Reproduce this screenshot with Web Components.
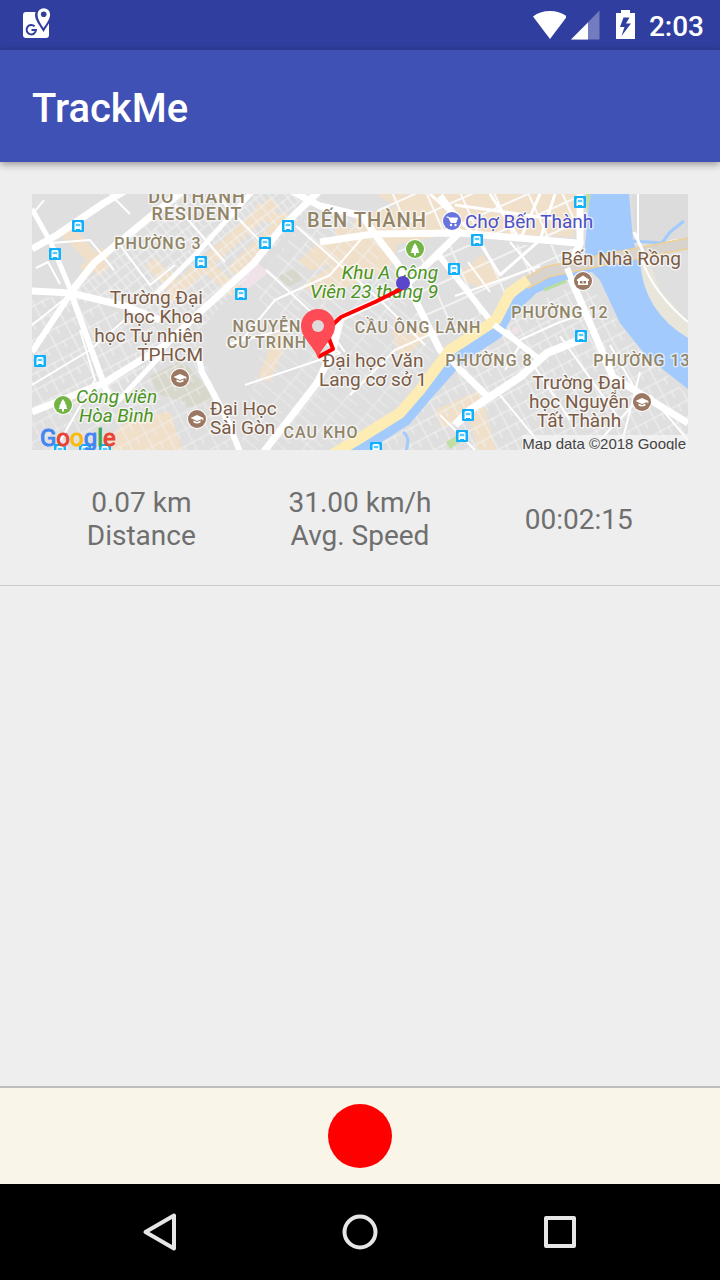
<!DOCTYPE html>
<html lang="en">
<head>
<meta charset="utf-8">
<meta name="viewport" content="width=device-width, initial-scale=1">
<title>TrackMe</title>
<style>
  body { margin: 0; background: #eee; font-family: Roboto, "Noto Sans", sans-serif; }
</style>
</head>
<body>
<track-app></track-app>

<template id="status-bar">
  <style>
    :host { display: flex; align-items: center; gap: 12px; height: 50px; padding: 0 16px 0 22px; background: #303f9f; color: #fff; }
    svg { display: block; flex: none; }
    .space { flex: 1; }
    .signal { display: flex; gap: 4px; }
    time { font-size: 28px; line-height: 32px; font-weight: 500; padding-top: 4px; }
  </style>
  <svg width="30" height="34" viewBox="22 8 30 34" aria-hidden="true">
    <rect x="23" y="12" width="26" height="26" rx="3" fill="#fff"/>
    <path d="M43.500 32C40 26 35 20 35 15a8.500 8.500 0 0 1 17 0C52 20 47 26 43.500 32Z" fill="#303f9f"/>
    <path d="M43.500 28C40.500 23.500 37.500 19 37.500 14.500a6.300 6.300 0 0 1 12.600 0C50 19 46.500 23.500 43.500 28Z" fill="#fff"/>
    <circle cx="43.700" cy="14.300" r="2.800" fill="#303f9f"/>
    <path d="M34.600 26.300A4.700 4.700 0 1 0 36 30h-4.500" fill="none" stroke="#303f9f" stroke-width="2"/>
  </svg>
  <span class="space"></span>
  <div class="signal">
    <svg width="34" height="30" viewBox="532 10 34 30" aria-hidden="true"><path d="M550 39 533 16.500Q540 11 550 11t17 5.500Z" fill="#fff"/></svg>
    <svg width="29" height="30" viewBox="570 10 29 30" overflow="visible" aria-hidden="true"><path d="M599.500 10.500V39.500H571Z" fill="#fff" opacity=".32"/><path d="M588 22.500V39.500H571Z" fill="#fff"/></svg>
  </div>
  <svg width="26" height="30" viewBox="611 10 26 30" aria-hidden="true">
    <path d="M621 10h9v3h5v26h-19V13h5Z" fill="#fff"/>
    <path d="M629.500 17.500H623.500L620 27h4.500l-3 9 9.500-12.500h-5Z" fill="#303f9f"/>
  </svg>
  <time>2:03</time>
</template>

<template id="app-toolbar">
  <style>
    :host { display: flex; align-items: center; height: 112px; padding: 0 32px; background: #3f51b5; color: #fff; box-shadow: 0 2px 8px rgba(0,0,0,.4); position: relative; }
    h1 { margin: 0; padding-top: 6px; font-size: 40px; line-height: 48px; font-weight: 500; }
  </style>
  <h1><slot></slot></h1>
</template>

<template id="ride-stat">
  <style>
    :host { display: block; font-size: 28px; line-height: 33px; color: #6f6f6f; text-align: center; }
    ::slotted(*) { display: block; }
  </style>
  <slot></slot>
</template>

<template id="ride-item">
  <style>
    :host { display: block; padding: 32px 32px 33px; border-bottom: 1px solid #ccc; }
    .stats { display: grid; grid-template-columns: repeat(3, 1fr); align-items: center; margin-top: 36px; }
  </style>
  <slot name="map"></slot>
  <div class="stats"><slot></slot></div>
</template>

<template id="record-bar">
  <style>
    :host { display: flex; justify-content: center; padding: 16px; background: #f9f5e8; border-top: 2px solid #bdbdbd; }
    button { width: 64px; height: 64px; padding: 0; border: 0; border-radius: 50%; background: #f00; }
  </style>
  <button type="button" aria-label="Record"></button>
</template>

<template id="nav-bar">
  <style>
    :host { display: flex; justify-content: center; gap: 56px; height: 96px; background: #000; }
    button { width: 144px; padding: 0; border: 0; background: none; display: grid; place-items: center; }
    svg { display: block; fill: none; stroke: #e6e6e6; stroke-width: 4; stroke-linejoin: round; }
  </style>
  <button type="button" aria-label="Back"><svg width="40" height="40"><path d="M34 3.500v33L5.500 20Z"/></svg></button>
  <button type="button" aria-label="Home"><svg width="40" height="40"><circle cx="20" cy="20" r="15.500"/></svg></button>
  <button type="button" aria-label="Recent apps"><svg width="40" height="40"><rect x="6" y="6" width="28" height="28"/></svg></button>
</template>

<template id="route-map">
  <style>
    :host { display: block; }
    svg { display: block; width: 100%; height: auto; }
    text { font-family: Roboto, "Noto Sans", sans-serif; font-size: 19px; paint-order: stroke; stroke: rgba(255,255,255,.6); stroke-width: 3px; stroke-linejoin: round; }
    .area { font-size: 16px; font-weight: 500; letter-spacing: 1px; fill: #918467; text-anchor: middle; }
    .town { font-size: 20px; }
    .res { font-size: 18px; }
    .place { fill: #7b5b45; }
    .park { fill: #4a9420; font-style: italic; }
    .shop { fill: #4a50c8; }
    .mid { text-anchor: middle; }
    .end { text-anchor: end; }
    .logo { font-size: 24px; stroke: #fff; }
    .credit { font-family: "Liberation Sans", Arial, sans-serif; font-size: 15px; fill: #444; stroke: none; text-anchor: end; }
    .road { fill: none; stroke: #fff; stroke-linejoin: round; }
    .shops { fill: none; stroke: #f0dfc9; stroke-width: 13; }
  </style>
  <svg viewBox="32 194 656 256" role="img" aria-label="Route map">
    <defs>
      <pattern id="a" width="13" height="19" patternUnits="userSpaceOnUse" patternTransform="rotate(-38)"><path d="M0 1H13M1 0V19M7 9V19M0 10H13" stroke="#f2f2f2" fill="none"/></pattern>
      <pattern id="b" width="19" height="15" patternUnits="userSpaceOnUse" patternTransform="rotate(-28)"><path d="M0 1H19M1 0V15M10 0V8" stroke="#f2f2f2" fill="none"/></pattern>
      <pattern id="c" width="18" height="26" patternUnits="userSpaceOnUse" patternTransform="rotate(-50)"><path d="M0 1H18M1 0V26M9 0V14" stroke="#f0f0f0" fill="none"/></pattern>
      <pattern id="d" width="31" height="23" patternUnits="userSpaceOnUse" patternTransform="rotate(-24)"><path d="M0 1H31M1 0V23" stroke="#fafafa" stroke-width="2" fill="none"/></pattern>
      <g id="bus"><rect x="-6" y="-6" width="12" height="12" rx="1" fill="#12b0fb"/><path d="M-3.500-2.500q0-1.500 1.500-1.500h4q1.500 0 1.500 1.500V4h-1.500V3h-4V4h-1.500Z" fill="#fff"/><path d="M-2.300-2.200h4.600v2.400h-4.600Z" fill="#12b0fb" opacity=".7"/></g>
      <g id="school"><circle r="10" fill="#fff"/><circle r="9" fill="#9c7761"/><path d="M-6.500-1 0-4 6.500-1 6 2.500 5.300 0 0 2Z" fill="#fff"/><path d="M-3.500 1.500 0 3 3.500 1.500V3.500Q0 5.500-3.500 3.500Z" fill="#fff"/></g>
      <g id="tree"><circle r="10" fill="#fff"/><circle r="9" fill="#74b444"/><path d="M0-6 2.500-2H2L4 1.500H3L4.500 4H1V6.500H-1V4H-4.500L-3 1.500H-4L-2-2H-2.500Z" fill="#fff"/></g>
    </defs>
    <path d="M32 194h656v256H32Z" fill="#dfdfdf"/>

    <g class="shops">
      <path d="M62 236 76 228M74 238 96 262 104 272M84 272 106 252M274 202 165 300M200 260 236 292M290 216 232 272M254 210 284 222M150 262 176 288"/>
      <path d="M282 334 264 380M398 330 404 350 424 330M106 442 172 418"/>
    </g>
    <g fill="#f0dfc9">
      <path d="M376 194H578l-4 43-110-4-40 6-62 12-50 20-14-10 20-18 32-6 6-22 40-8Z"/>
      <path d="M335 226 400 236l-8 30-70 34-20-14 34-24Z"/>
      <path d="M130 416 170 412l12 38H100Z"/>
      <path d="M462 272 482 254l18 24-14 12-20-8Z"/>
      <path d="M435 410 480 390l16 60H478l-8-30-28 8Z"/>
    </g>
    <path d="M240 282 256 262 269 272 244 292ZM510 332l6-7 4 6-8 6Z" fill="#f0e2e8"/>
    <path d="M150 376 182 360l20 22-18 20-26-8ZM186 380l18 4 12 16-30 8ZM278 276l18-8 6 12-16 8Z" fill="#d8d7cb"/>

    <path d="M32 300 72 294 200 345 120 395 32 412Z" fill="url(#b)"/>
    <path d="M95 262 184 194h138L200 330 72 294Z" fill="url(#a)"/>
    <path d="M32 412 200 350 240 450H32Z" fill="url(#b)" opacity=".8"/>
    <path d="M250 290 320 200 363 216 430 330 310 330 270 310Z" fill="url(#c)"/>
    <path d="M262 345 300 330 430 320 440 345 400 405 340 450H240Z" fill="url(#c)" opacity=".75"/>
    <path d="M363 194H580V240L400 236Z" fill="url(#d)"/>
    <path d="M395 245H580L560 270 500 300 440 345Z" fill="url(#d)" opacity=".7"/>
    <path d="M520 310 585 280 640 350 688 395V450H360L430 400Z" fill="url(#b)"/>
    <path d="M632 194h56v50l-54-4Z" fill="#dcdcdc"/>

    <g class="road" stroke-width="2">
      <path d="M32 325 71 294M51 243 90 240 114 270M36 268 48 262 60 284M32 385 90 350 127 318M55 450 95 380 80 330M32 215 44 200M110 194 130 214"/>
      <path d="M120 245 150 285 175 265M175 205 225 262M215 194 262 243M226 345 300 325 340 353 245 385"/>
      <path d="M242 340 275 300 330 275 362 238M266 270 325 325 345 352M296 226 380 300 425 345M350 395 395 350 440 330"/>
      <path d="M455 296 540 266M468 262 490 292M510 242 535 272M508 330 520 345 505 370M520 340 560 322 590 312"/>
      <path d="M440 415 475 450M500 395 545 450M530 360 570 420M560 336 620 420M610 345 640 398 600 440M640 372 620 450M650 395 688 440"/>
      <path d="M638 194v50M640 270 662 300 688 324M655 252q10-14 33-12"/>
    </g>
    <g class="road" stroke-width="3">
      <path d="M430 194 475 235 500 275 540 240M490 194 520 240M540 194 520 240M455 205 560 220M555 194 540 240"/>
    </g>
    <g class="road" stroke-width="7">
      <path d="M32 249 57 235 104 203 130 188M71 292 94 263 151 216 184 190"/>
      <path d="M32 209 51 243 71 291" stroke-width="5"/>
      <path d="M32 291 71 293 125 306 160 320"/>
      <path d="M197 350 202 372 227 419 240 452M71 293 32 352M71 293 106 390 114 400" stroke-width="6"/>
      <path d="M32 412 104 383 165 345 200 312 254 263 283 226 322 188"/>
      <path d="M117 402 164 352M150 300 197 253 252 192" stroke-width="5"/>
      <path d="M290 190 320 206 363 216 372 230M320 242 373 234 460 233 577 243M370 228 397 263 440 350 487 396"/>
      <path d="M405 288 375 302 341 318 333 350 317 383 262 454M440 196 455 216M462 230 397 294" stroke-width="7"/>
      <path d="M580 194v50l-13 26 13 30 33 77 75 46"/>
      <path d="M455 425 470 410 520 377 547 353 587 337" stroke-width="8"/>
      <path d="M437 253 490 320 540 360" stroke-width="6"/>
    </g>

    <path d="M590 194h39l4 46 9 30 11 30 35 37v52l-41-32-27-34-20-43-13-13-2-20Z" fill="#a2cafd"/>
    <path d="M640 262q4 50 48 76V322L660 290 648 258Z" fill="#e8e6da"/>
    <path d="M642 260q12 34 46 62" class="road" stroke-width="2"/>
    <path d="M632 241 662 243 670 232 684 221M403 432q8 6 3 18" fill="none" stroke="#a2cafd" stroke-width="3"/>
    <path d="M590 266 563 275 533 288 507 313 497 333 460 357 428 393 405 420 358 450 340 460" fill="none" stroke="#a2cafd" stroke-width="12" stroke-linejoin="round"/>
    <path d="M544 290 566 281" stroke="#b8dda0" stroke-width="3"/>
    <path d="M586 194h5l-4 20ZM446 442l10-6 4 6-10 7Z" fill="#c0dfa4"/>
    <path d="M700 241 593 262 547 272 525 284" fill="none" stroke="#efcf92" stroke-width="12"/>
    <path d="M700 241 593 262 547 272 525 284" fill="none" stroke="#d8d4cd" stroke-width="9"/>
    <path d="M528 280 510 293 496 320 450 350 420 390 400 413 360 438 330 456" fill="none" stroke="#fdecb4" stroke-width="11" stroke-linejoin="round"/>
    <path d="M567 268 580 300M494 325 512 338M448 356 460 370" class="road" stroke-width="6"/>
    <path d="M634 232 648 262" class="road" stroke-width="3"/>

    <use href="#bus" x="78" y="226"/><use href="#bus" x="55" y="254"/><use href="#bus" x="201" y="262"/>
    <use href="#bus" x="241" y="294"/><use href="#bus" x="288" y="226"/><use href="#bus" x="265" y="243"/>
    <use href="#bus" x="40" y="361"/><use href="#bus" x="477" y="240"/><use href="#bus" x="454" y="269"/>
    <use href="#bus" x="580" y="202"/><use href="#bus" x="581" y="336"/><use href="#bus" x="468" y="415"/>
    <use href="#bus" x="462" y="436"/><use href="#bus" x="376" y="448"/><use href="#bus" x="60" y="450"/>
    <use href="#bus" x="85" y="450"/><use href="#bus" x="105" y="450"/>
    <use href="#school" x="180" y="378"/><use href="#school" x="197" y="419"/><use href="#school" x="642" y="402"/>
    <use href="#tree" x="415" y="249"/><use href="#tree" x="63" y="405"/>
    <g transform="translate(583 281)"><circle r="10" fill="#fff"/><circle r="9" fill="#9c7761"/><path d="M-6-1.500 0-5.500 6-1.500V0H5V4H-5V0H-6Z" fill="#fff"/><path d="M-3 0h6v2.500h-6Z" fill="#9c7761"/><path d="M0 0v2.500" stroke="#fff"/></g>
    <g transform="translate(452 221)"><circle r="10" fill="#fff"/><circle r="9" fill="#6873de"/><path d="M-5.500-4h2L-1 1.500H4L5.500-3H-3" fill="#fff" stroke="#fff"/><circle cx="-1" cy="4" r="1.200" fill="#fff"/><circle cx="3.500" cy="4" r="1.200" fill="#fff"/></g>

    <text class="area res" x="197" y="203">DO THANH</text>
    <text class="area res" x="197" y="220">RESIDENT</text>
    <text class="area" x="158" y="249">PHƯỜNG 3</text>
    <text class="area town" x="367" y="227">BẾN THÀNH</text>
    <text class="shop" x="465" y="228">Chợ Bến Thành</text>
    <text class="park end" x="438" y="279">Khu A Công</text>
    <text class="park end" x="438" y="298">Viên 23 tháng 9</text>
    <text class="place" x="561" y="265">Bến Nhà Rồng</text>
    <text class="place end" x="203" y="304">Trường Đại</text>
    <text class="place end" x="203" y="323">học Khoa</text>
    <text class="place end" x="203" y="342">học Tự nhiên</text>
    <text class="place end" x="203" y="361">TPHCM</text>
    <text class="area" x="267" y="332">NGUYỄN</text>
    <text class="area" x="267" y="348">CƯ TRINH</text>
    <text class="area" x="418" y="333">CẦU ÔNG LÃNH</text>
    <text class="area" x="560" y="318">PHƯỜNG 12</text>
    <text class="area" x="489" y="366">PHƯỜNG 8</text>
    <text class="area" x="642" y="366">PHƯỜNG 13</text>
    <text class="place mid" x="373" y="367">Đại học Văn</text>
    <text class="place mid" x="373" y="386">Lang cơ sở 1</text>
    <text class="place mid" x="579" y="389">Trường Đại</text>
    <text class="place mid" x="579" y="408">học Nguyễn</text>
    <text class="place mid" x="579" y="427">Tất Thành</text>
    <text class="park" x="76" y="403">Công viên</text>
    <text class="park" x="79" y="422">Hòa Bình</text>
    <text class="place" x="210" y="415">Đại Học</text>
    <text class="place" x="210" y="434">Sài Gòn</text>
    <text class="area" x="321" y="438">CAU KHO</text>

    <path d="M403 288 375 302 341 317 326 331 333 349 318 357" fill="none" stroke="#f00" stroke-width="4" stroke-linejoin="round"/>
    <path d="M318 358C314 346 301 338 301 326a17 17 0 0 1 34 0C335 338 322 346 318 358Z" fill="#ff4b55"/>
    <circle cx="318" cy="326" r="6" fill="#e0dada"/>
    <circle cx="403" cy="283" r="7" fill="#5a46cb"/>

    <text class="logo" x="40" y="446"><tspan fill="#4285f4" stroke="#4285f4" stroke-width="1">G</tspan><tspan fill="#ea4335" stroke="#ea4335" stroke-width="1">o</tspan><tspan fill="#fbbc05" stroke="#fbbc05" stroke-width="1">o</tspan><tspan fill="#4285f4" stroke="#4285f4" stroke-width="1">g</tspan><tspan fill="#34a853" stroke="#34a853" stroke-width="1">l</tspan><tspan fill="#ea4335" stroke="#ea4335" stroke-width="1">e</tspan></text>
    <path d="M522 435h166v15H522Z" fill="#f5f5f5" opacity=".75"/>
    <text class="credit" x="686" y="449">Map data ©2018 Google</text>
  </svg>
</template>

<template id="track-app">
  <style>
    :host { display: flex; flex-direction: column; min-height: 100vh; background: #eee; }
    main { flex: 1; }
  </style>
  <status-bar></status-bar>
  <app-toolbar>TrackMe</app-toolbar>
  <main>
    <ride-item>
      <route-map slot="map"></route-map>
      <ride-stat><span>0.07 km</span><span>Distance</span></ride-stat>
      <ride-stat><span>31.00 km/h</span><span>Avg. Speed</span></ride-stat>
      <ride-stat><span>00:02:15</span></ride-stat>
    </ride-item>
  </main>
  <record-bar></record-bar>
  <nav-bar></nav-bar>
</template>

<script>
  class TemplateElement extends HTMLElement {
    constructor() {
      super();
      const template = document.getElementById(this.localName);
      this.attachShadow({ mode: "open" }).append(template.content.cloneNode(true));
    }
  }
  for (const name of ["status-bar", "app-toolbar", "ride-stat", "route-map", "ride-item", "record-bar", "nav-bar", "track-app"]) {
    customElements.define(name, class extends TemplateElement {});
  }
</script>
</body>
</html>
